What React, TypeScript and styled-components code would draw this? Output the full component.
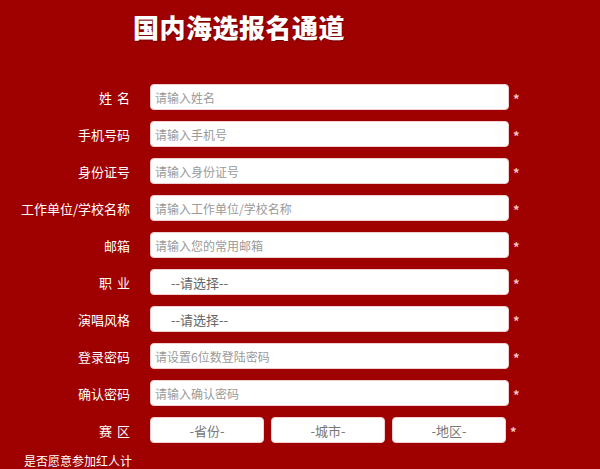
import styled, { createGlobalStyle } from "styled-components";

const GlobalStyle = createGlobalStyle`
  html, body {
    margin: 0;
    padding: 0;
    background: #9f0000;
  }
  body {
    font-family: "Noto Sans CJK SC", "Noto Sans", sans-serif;
  }
`;

const Page = styled.div`
  width: 600px;
  height: 469px;
  overflow: hidden;
  background: #9f0000;
`;

const Title = styled.h1`
  margin: 0;
  padding: 8px 0 0 133px;
  height: 84px;
  box-sizing: border-box;
  font-size: 26px;
  line-height: 38px;
  font-weight: 900;
  color: #ffffff;
  letter-spacing: 0.5px;
  text-shadow: 1px 1px 1px rgba(80, 0, 0, 0.6);
`;

const Form = styled.div`
  display: flex;
  flex-direction: column;
  gap: 11px;
`;

const Row = styled.div`
  display: flex;
  align-items: center;
  height: 26px;
`;

const Label = styled.div`
  width: 130px;
  flex-shrink: 0;
  text-align: right;
  color: #ffffff;
  font-size: 13px;
  white-space: nowrap;
`;

const Spaced = styled.span`
  letter-spacing: 5px;
  margin-right: -5px;
`;

const Field = styled.div<{ $select?: boolean }>`
  margin-left: 20px;
  width: 359px;
  flex-shrink: 0;
  height: 26px;
  box-sizing: border-box;
  background: #ffffff;
  border: 1px solid #f0d0d0;
  border-radius: 4px;
  display: flex;
  align-items: center;
  padding-left: ${(p) => (p.$select ? "20px" : "4px")};
  font-size: ${(p) => (p.$select ? "13px" : "12px")};
  color: ${(p) => (p.$select ? "#666" : "#9a9a9a")};
`;

const Star = styled.span`
  margin-left: 4px;
  padding-top: 3px;
  color: #f7c4c4;
  font-size: 13px;
  font-weight: bold;
  line-height: 1;
`;

const Areas = styled.div`
  margin-left: 20px;
  display: flex;
  gap: 7px;
`;

const AreaBox = styled.div`
  width: 114px;
  height: 26px;
  box-sizing: border-box;
  background: #ffffff;
  border: 1px solid #f0d0d0;
  border-radius: 4px;
  display: flex;
  align-items: center;
  justify-content: center;
  font-size: 13px;
  color: #777;
`;

const LongLabel = styled.div`
  padding: 10px 0 0 24px;
  width: 110px;
  color: #ffffff;
  font-size: 12px;
  line-height: 16px;
`;

const fields = [
  { label: "姓名", spaced: true, text: "请输入姓名" },
  { label: "手机号码", text: "请输入手机号" },
  { label: "身份证号", text: "请输入身份证号" },
  { label: "工作单位/学校名称", text: "请输入工作单位/学校名称" },
  { label: "邮箱", text: "请输入您的常用邮箱" },
  { label: "职业", spaced: true, text: "--请选择--", select: true },
  { label: "演唱风格", text: "--请选择--", select: true },
  { label: "登录密码", text: "请设置6位数登陆密码" },
  { label: "确认密码", text: "请输入确认密码" },
];

const areas = ["-省份-", "-城市-", "-地区-"];

const App = () => {
  return (
    <Page>
      <GlobalStyle />
      <Title>国内海选报名通道</Title>
      <Form>
        {fields.map((f) => (
          <Row key={f.label}>
            <Label>{f.spaced ? <Spaced>{f.label}</Spaced> : f.label}</Label>
            <Field $select={f.select}>{f.text}</Field>
            <Star>*</Star>
          </Row>
        ))}
        <Row>
          <Label>
            <Spaced>赛区</Spaced>
          </Label>
          <Areas>
            {areas.map((a) => (
              <AreaBox key={a}>{a}</AreaBox>
            ))}
          </Areas>
          <Star>*</Star>
        </Row>
      </Form>
      <LongLabel>是否愿意参加红人计划</LongLabel>
    </Page>
  );
};

export default App;
